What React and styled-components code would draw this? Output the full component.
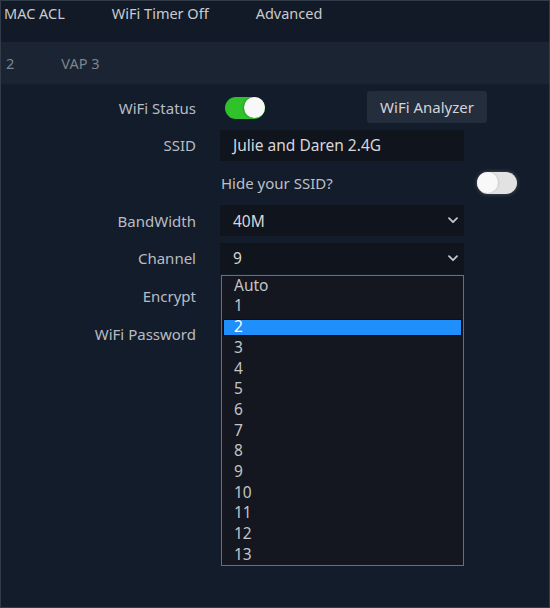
import React from 'react';
import styled, { createGlobalStyle } from 'styled-components';

const GlobalStyle = createGlobalStyle`
  * { box-sizing: border-box; }
  html, body { margin: 0; padding: 0; background: #131c2a; }
  body { font-family: "Noto Sans", "Open Sans", sans-serif; }
`;

const channels = ['Auto', '1', '2', '3', '4', '5', '6', '7', '8', '9', '10', '11', '12', '13'];

const Chevron = () => (
  <svg width="10" height="7" viewBox="0 0 10 7">
    <path d="M1 1.2 L5 5.2 L9 1.2" fill="none" stroke="#c4c7cc" strokeWidth="1.8" strokeLinecap="round" strokeLinejoin="round" />
  </svg>
);

const App = () => {
  return (
    <Frame>
      <GlobalStyle />
      <TopTabs>
        <Tab>MAC ACL</Tab>
        <Tab>WiFi Timer Off</Tab>
        <Tab>Advanced</Tab>
      </TopTabs>
      <SubTabs>
        <SubTab>2</SubTab>
        <SubTab>VAP 3</SubTab>
      </SubTabs>
      <Form>
        <Row>
          <Label>WiFi Status</Label>
          <Controls>
            <Toggle $on><Knob $on /></Toggle>
            <AnalyzerButton>WiFi Analyzer</AnalyzerButton>
          </Controls>
        </Row>
        <Row>
          <Label>SSID</Label>
          <Field>Julie and Daren 2.4G</Field>
        </Row>
        <Row>
          <Label />
          <Controls $spread>
            <Question>Hide your SSID?</Question>
            <Toggle><Knob /></Toggle>
          </Controls>
        </Row>
        <Row>
          <Label>BandWidth</Label>
          <Field>40M<Chevron /></Field>
        </Row>
        <Row>
          <Label>Channel</Label>
          <SelectWrap>
            <Field>9<Chevron /></Field>
            <Dropdown>
              {channels.map((c) => (
                <Option key={c} $active={c === '2'}>{c}</Option>
              ))}
            </Dropdown>
          </SelectWrap>
        </Row>
        <Row>
          <Label>Encrypt</Label>
        </Row>
        <Row>
          <Label>WiFi Password</Label>
        </Row>
      </Form>
    </Frame>
  );
};

export default App;

const Frame = styled.div`
  height: 100vh;
  border: 1px solid #323b48;
  background: #131c2a;
  overflow: hidden;
`;

const TopTabs = styled.div`
  height: 41px;
  background: #121a27;
  display: flex;
  align-items: flex-start;
  gap: 47px;
  padding: 1px 0 0 3px;
`;

const Tab = styled.div`
  font-size: 14.5px;
  line-height: 22px;
  color: #c9cbcf;
`;

const SubTabs = styled.div`
  height: 43px;
  background: #1b2432;
  border-bottom: 1px solid #161e2a;
  display: flex;
  align-items: center;
  gap: 47px;
  padding-left: 5px;
`;

const SubTab = styled.div`
  font-size: 14.5px;
  color: #7d8490;
`;

const Form = styled.div`
  padding-top: 7px;
  display: flex;
  flex-direction: column;
  gap: 6.7px;
`;

const Row = styled.div`
  display: grid;
  grid-template-columns: 195px 297px;
  column-gap: 24px;
  align-items: center;
  height: 31px;
`;

const Label = styled.div`
  text-align: right;
  font-size: 15px;
  color: #b9bdc3;
`;

const Controls = styled.div`
  display: flex;
  align-items: center;
  justify-content: ${(p) => (p.$spread ? 'space-between' : 'flex-start')};
`;

const Toggle = styled.div`
  width: 40px;
  height: 22px;
  border-radius: 11px;
  background: ${(p) => (p.$on ? '#2fc22b' : '#e2e2e2')};
  display: flex;
  align-items: center;
  justify-content: ${(p) => (p.$on ? 'flex-end' : 'flex-start')};
  margin-left: ${(p) => (p.$on ? '5px' : '0')};
  box-shadow: ${(p) => (p.$on ? 'none' : '0 0 4px rgba(255,255,255,0.25)')};
`;

const Knob = styled.div`
  width: 21px;
  height: 21px;
  border-radius: 50%;
  background: #f8f8f8;
  box-shadow: ${(p) => (p.$on ? '-1px 0 2px rgba(0,0,0,0.2)' : '1px 0 2px rgba(0,0,0,0.1)')};
`;

const AnalyzerButton = styled.button`
  margin-left: 102px;
  height: 32px;
  width: 120px;
  margin-top: -1px;
  border: none;
  border-radius: 3px;
  background: #242d3b;
  color: #d2d4d8;
  font-family: inherit;
  font-size: 15px;
  padding: 0;
`;

const Field = styled.div`
  width: 244px;
  height: 31px;
  background: #10141c;
  display: flex;
  align-items: center;
  justify-content: space-between;
  padding: 0 6px 0 13px;
  font-size: 15.5px;
  color: #d6d7da;
`;

const Question = styled.div`
  font-size: 15px;
  color: #bcc0c6;
  padding-left: 1px;
`;

const SelectWrap = styled.div`
  position: relative;
  width: 244px;
`;

const Dropdown = styled.div`
  position: absolute;
  top: calc(100% + 1px);
  left: 1px;
  width: 243px;
  border: 1px solid #6e6e72;
  background: #14171f;
  z-index: 2;
`;

const Option = styled.div`
  height: 20.7px;
  line-height: 15.5px;
  padding-left: 11px;
  margin: 0 1px;
  font-size: 15.5px;
  color: ${(p) => (p.$active ? '#ffffff' : '#c2c5ca')};
  border-top: 2px solid transparent;
  border-bottom: 2px solid transparent;
  background: ${(p) => (p.$active ? '#1e8ffb' : 'transparent')};
  background-clip: padding-box;
  box-shadow: ${(p) => (p.$active ? 'inset 0 0 0 1px #0a0d12' : 'none')};
`;
